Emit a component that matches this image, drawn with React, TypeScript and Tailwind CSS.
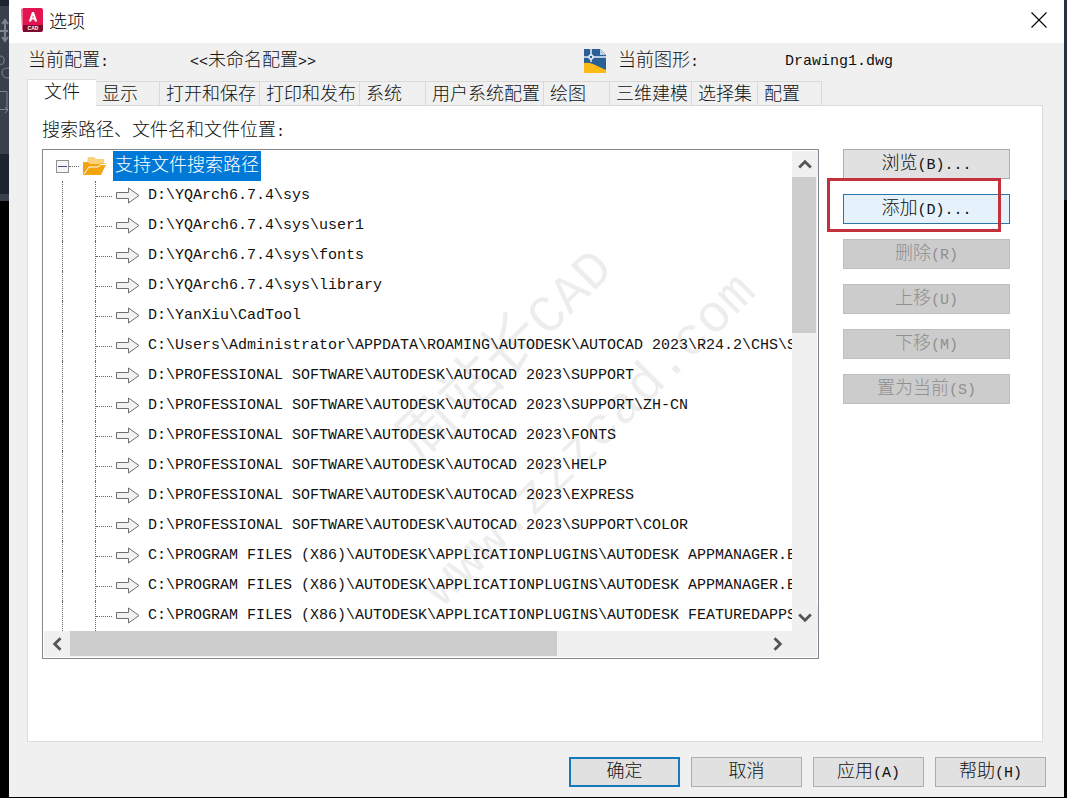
import { ReactNode } from "react";

const tabs = [
  { label: "显示", width: "w-[64px]" },
  { label: "打开和保存", width: "w-[100px]" },
  { label: "打印和发布", width: "w-[100px]" },
  { label: "系统", width: "w-[66px]" },
  { label: "用户系统配置", width: "w-[118px]" },
  { label: "绘图", width: "w-[66px]" },
  { label: "三维建模", width: "w-[82px]" },
  { label: "选择集", width: "w-[66px]" },
  { label: "配置", width: "w-[64px]" },
];

const paths = [
  "D:\\YQArch6.7.4\\sys",
  "D:\\YQArch6.7.4\\sys\\user1",
  "D:\\YQArch6.7.4\\sys\\fonts",
  "D:\\YQArch6.7.4\\sys\\library",
  "D:\\YanXiu\\CadTool",
  "C:\\Users\\Administrator\\APPDATA\\ROAMING\\AUTODESK\\AUTOCAD 2023\\R24.2\\CHS\\SUPPORT",
  "D:\\PROFESSIONAL SOFTWARE\\AUTODESK\\AUTOCAD 2023\\SUPPORT",
  "D:\\PROFESSIONAL SOFTWARE\\AUTODESK\\AUTOCAD 2023\\SUPPORT\\ZH-CN",
  "D:\\PROFESSIONAL SOFTWARE\\AUTODESK\\AUTOCAD 2023\\FONTS",
  "D:\\PROFESSIONAL SOFTWARE\\AUTODESK\\AUTOCAD 2023\\HELP",
  "D:\\PROFESSIONAL SOFTWARE\\AUTODESK\\AUTOCAD 2023\\EXPRESS",
  "D:\\PROFESSIONAL SOFTWARE\\AUTODESK\\AUTOCAD 2023\\SUPPORT\\COLOR",
  "C:\\PROGRAM FILES (X86)\\AUTODESK\\APPLICATIONPLUGINS\\AUTODESK APPMANAGER.BUNDLE",
  "C:\\PROGRAM FILES (X86)\\AUTODESK\\APPLICATIONPLUGINS\\AUTODESK APPMANAGER.BUNDLE",
  "C:\\PROGRAM FILES (X86)\\AUTODESK\\APPLICATIONPLUGINS\\AUTODESK FEATUREDAPPS.BUNDLE",
];

const sideButtons = [
  { label: "删除", suffix: "(R)" },
  { label: "上移", suffix: "(U)" },
  { label: "下移", suffix: "(M)" },
  { label: "置为当前", suffix: "(S)" },
];

// Latin text sits in a 9px cell, half the width of a Chinese character
const Latin = ({ children }: { children: ReactNode }) => (
  <span className="text-[15px] leading-none">{children}</span>
);

const AppIcon = () => (
  <svg className="h-6 w-[22px]" viewBox="0 0 22 24" aria-hidden="true">
    <path d="M0 1 L3 0 V24 L1 22 Z" fill="#f0668c" />
    <path d="M2 0 H20 Q22 0 22 2 V17 H2 Z" fill="#e31450" />
    <path d="M2 17 H22 V22 Q22 24 20 24 H2 Z" fill="#7d0a30" />
    <path d="M7.8 13.5 L11 4 H13 L16.2 13.5 H13.8 L13.2 11.6 H10.8 L10.2 13.5 Z M11.3 9.8 H12.7 L12 7.2 Z" fill="#fff" fillRule="evenodd" />
    <text x="12" y="22.3" textAnchor="middle" fill="#fff" fontFamily="Liberation Sans, sans-serif" fontSize="5" fontWeight="700">
      CAD
    </text>
  </svg>
);

const DrawingIcon = () => (
  <svg className="h-6 w-[22px]" viewBox="0 0 22 24" aria-hidden="true">
    <path d="M0 0 H16 L22 6 V24 H0 Z" fill="#2b6097" />
    <path d="M16 0 L22 6 H16 Z" fill="#b9cfe2" />
    <path d="M0 14 Q4 13 9 15 L22 21 V24 H0 Z" fill="#fbba16" />
    <path d="M7 0 V13 M0 8 H22" stroke="#e8f0f7" strokeWidth="1.5" />
    <circle cx="7" cy="8" r="2" fill="#2b6097" stroke="#e8f0f7" strokeWidth="1.4" />
  </svg>
);

const FolderIcon = () => (
  <svg className="h-5 w-6" viewBox="0 0 24 20" aria-hidden="true">
    <path d="M4 6 L5 1 H11 L13 3 H21 V9 H4 Z" fill="#fbd27c" />
    <path d="M0 6 H5 L7 8 H16 L13 12 L0 19 Z" fill="#f2a30f" />
    <path d="M6 9.5 L15 9 L17 7.5 H23.5 L18 19 H0 Z" fill="#f5a50c" />
    <path d="M1 18 L6 11 H15 L18 8.5 H23" fill="none" stroke="#fff" strokeWidth="1" />
  </svg>
);

const ArrowIcon = () => (
  <svg className="h-[18px] w-6" viewBox="0 0 24 18" aria-hidden="true">
    <path d="M0.5 5.5 H12.5 V1 L23 8.5 L12.5 16 V11.5 H0.5 Z" fill="#f2f2f2" stroke="#6f6f6f" />
  </svg>
);

const Chevron = ({ d, label }: { d: string; label: string }) => (
  <button type="button" aria-label={label} className="flex size-[26px] shrink-0 items-center justify-center bg-[#f0f0f0]">
    <svg className="size-[14px]" viewBox="0 0 12 12" aria-hidden="true">
      <path d={d} fill="none" stroke="#555" strokeWidth="2.4" />
    </svg>
  </button>
);

// Edge of the application window that stays visible beside the dialog
const Backdrop = () => (
  <div className="w-[9px] shrink-0">
    <div className="h-[6px] bg-[#1d2430]" />
    <div className="h-[148px] bg-[#38414d]">
      <svg className="h-[148px] w-[9px]" viewBox="0 0 9 148" fill="none" stroke="#7d8691" aria-hidden="true">
        <path d="M5 15 V34 M0 25 H8 M2 18 L5 14 L8 18 M2 31 L5 35 L8 31" strokeWidth="2" />
        <path d="M0 50 Q5 50 4 55 Q3 60 0 58 M9 62 Q1 62 2 67 Q2 72 9 72" />
        <path d="M0 85.5 H7 V104 M0 103.5 H8 M5 101 L8 104 L5 107" />
      </svg>
    </div>
    <div className="h-10 bg-[#1d2430]" />
    <div className="h-[7px] bg-[#38414d]" />
  </div>
);

const PathRow = ({ path }: { path: string }) => (
  <li role="treeitem" className="flex h-[30px] items-center pl-[18px]">
    <span className="h-full w-[33px] shrink-0 border-l border-dotted border-[#666]" />
    <span className="flex h-full w-[21px] shrink-0 items-center border-l border-dotted border-[#666]">
      <span className="w-4 border-t border-dotted border-[#666]" />
    </span>
    <span className="mr-2 shrink-0">
      <ArrowIcon />
    </span>
    <span className="text-[15px] whitespace-pre">{path}</span>
  </li>
);

const PathTree = () => (
  <div className="flex min-w-0 flex-1 flex-col border border-[#828790] bg-white p-px">
    <div className="flex">
      <ul role="tree" aria-labelledby="paths-label" className="min-w-0 flex-1 overflow-hidden">
        <li role="treeitem" aria-expanded="true" aria-selected="true" className="flex h-[30px] items-center pl-3">
          <button
            type="button"
            aria-label="折叠"
            className="flex size-[13px] shrink-0 items-center justify-center border border-[#919191] bg-[#f5f5f8]"
          >
            <span className="h-px w-[9px] bg-[#3c4c8c]" />
          </button>
          <span className="mr-1 w-[10px] shrink-0 border-t border-dotted border-[#666]" />
          <FolderIcon />
          <span className="ml-[6px] bg-[#0078d7] px-[2px] leading-[30px] whitespace-nowrap text-white">
            支持文件搜索路径
          </span>
        </li>
        {paths.map((path, index) => (
          <PathRow key={index} path={path} />
        ))}
      </ul>
      <div className="flex w-[25px] shrink-0 flex-col bg-[#f0f0f0]">
        <Chevron label="向上滚动" d="M1 9 L6 4 L11 9" />
        <div className="h-[156px] w-6 bg-[#cdcdcd]" />
        <div className="flex-1" />
        <Chevron label="向下滚动" d="M1 3 L6 8 L11 3" />
      </div>
    </div>
    <div className="flex h-[26px] bg-[#f0f0f0] pr-[26px]">
      <Chevron label="向左滚动" d="M9 1 L4 6 L9 11" />
      <div className="flex-1">
        <div className="h-[25px] w-[70%] bg-[#cdcdcd]" />
      </div>
      <Chevron label="向右滚动" d="M3 1 L8 6 L3 11" />
    </div>
  </div>
);

const Watermark = () => (
  <div
    aria-hidden="true"
    className="pointer-events-none absolute inset-0 flex items-center justify-center overflow-hidden pl-6"
  >
    <div className="-rotate-45 text-center text-[53px] leading-[117px] font-normal whitespace-nowrap text-black/7">
      <div>
        <span className="text-[60px]">周站长</span>CAD
      </div>
      <div>www.zzzcad.com</div>
    </div>
  </div>
);

const App = () => {
  return (
    <div className="flex min-h-screen bg-black pb-px font-['Liberation_Mono','Noto_Sans_CJK_SC',monospace] text-[18px] leading-6 font-light text-[#111]">
      <Backdrop />

      <main className="relative flex min-w-0 flex-1 flex-col bg-[#f0f0f0]">
        <header className="flex h-[43px] items-center bg-white pr-4 pb-[3px] pl-3">
          <AppIcon />
          <h1 className="ml-[6px] flex-1 font-['Noto_Sans_CJK_SC',sans-serif] text-black">选项</h1>
          <button type="button" aria-label="关闭" className="flex size-[18px] items-center justify-center">
            <svg className="size-4" viewBox="0 0 16 16" aria-hidden="true">
              <path d="M0.5 0.5 L15.5 15.5 M15.5 0.5 L0.5 15.5" stroke="#000" strokeWidth="1.1" />
            </svg>
          </button>
        </header>

        <div className="flex h-9 items-center pl-[19px] whitespace-nowrap">
          <span className="w-[162px]">
            当前配置<Latin>:</Latin>
          </span>
          <span className="w-[394px]">
            <Latin>&lt;&lt;</Latin>未命名配置<Latin>&gt;&gt;</Latin>
          </span>
          <DrawingIcon />
          <span className="ml-3 w-[167px]">
            当前图形<Latin>:</Latin>
          </span>
          <Latin>Drawing1.dwg</Latin>
        </div>

        <div role="tablist" className="relative z-10 -mb-px flex items-end pl-[18px] whitespace-nowrap">
          <button
            type="button"
            role="tab"
            aria-selected="true"
            className="h-[27px] w-[69px] border-t border-l border-[#dcdcdc] bg-white leading-[25px]"
          >
            文件
          </button>
          {tabs.map((tab) => (
            <button
              key={tab.label}
              type="button"
              role="tab"
              aria-selected="false"
              className={`h-[25px] border-y border-r border-[#d9d9d9] pt-px pl-[6px] text-left leading-6 ${tab.width}`}
            >
              {tab.label}
            </button>
          ))}
        </div>

        <section className="mr-[21px] ml-[18px] flex-1 border border-[#dcdcdc] bg-white pr-8 pl-[14px]">
          <p id="paths-label" className="pt-[13px] pb-[6px]">
            搜索路径、文件名和文件位置<Latin>:</Latin>
          </p>
          <div className="flex items-start gap-6">
            <PathTree />
            <div className="flex w-[167px] shrink-0 flex-col gap-[15px]">
              <button type="button" className="h-[30px] border border-[#adadad] bg-[#e1e1e1]">
                浏览<Latin>(B)...</Latin>
              </button>
              <div className="relative">
                <button type="button" className="h-[30px] w-full border border-[#2a76a8] bg-[#e5f1fb]">
                  添加<Latin>(D)...</Latin>
                </button>
                <div className="pointer-events-none absolute -top-4 right-[9px] -bottom-2 -left-4 border-3 border-[#c4303c]" />
              </div>
              {sideButtons.map((button) => (
                <button
                  key={button.label}
                  type="button"
                  disabled
                  className="h-[30px] border border-[#bfbfbf] bg-[#cccccc] text-[#8f8f8f]"
                >
                  {button.label}
                  <Latin>{button.suffix}</Latin>
                </button>
              ))}
            </div>
          </div>
        </section>

        <footer className="flex justify-end gap-[11px] pt-[15px] pr-[18px] pb-[10px]">
          <button type="button" className="h-[30px] w-[111px] border-2 border-[#1878bc] bg-[#e1e1e1]">
            确定
          </button>
          <button type="button" className="h-[30px] w-[111px] border border-[#adadad] bg-[#e1e1e1]">
            取消
          </button>
          <button type="button" className="h-[30px] w-[111px] border border-[#adadad] bg-[#e1e1e1]">
            应用<Latin>(A)</Latin>
          </button>
          <button type="button" className="h-[30px] w-[111px] border border-[#adadad] bg-[#e1e1e1]">
            帮助<Latin>(H)</Latin>
          </button>
        </footer>

        <Watermark />
      </main>

      <div className="w-[3px] shrink-0">
        <div className="h-[200px] bg-[#2a323e]" />
      </div>
    </div>
  );
};

export default App;
